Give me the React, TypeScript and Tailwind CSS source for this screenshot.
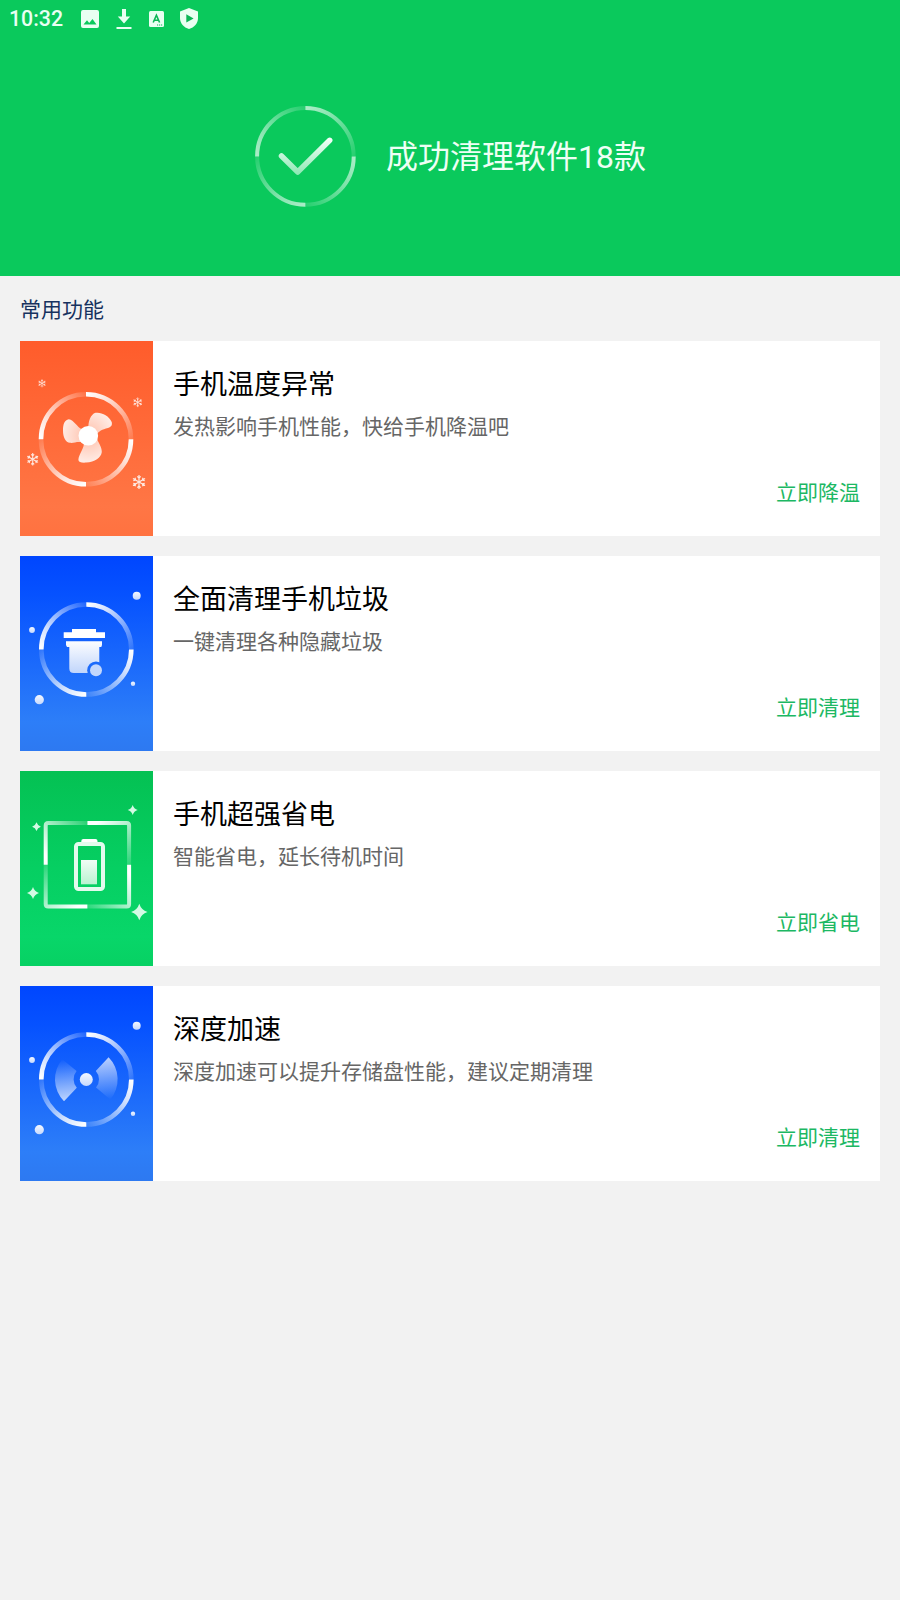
import React from 'react';

interface Feature {
  id: string;
  title: string;
  description: string;
  action: string;
  art: React.ReactNode;
}

interface RingProps {
  id: string;
  cx: number;
  cy: number;
  r: number;
  width: number;
  from?: number;
  to?: number;
}

const QUARTERS = [0, 90, 180, 270];

// Four quarter arcs, each fading clockwise
const Ring: React.FC<RingProps> = ({ id, cx, cy, r, width, from = 1, to = 0.12 }) => (
  <g transform={`translate(${cx} ${cy})`} fill="none">
    <defs>
      <linearGradient id={id} gradientUnits="userSpaceOnUse" x1="0" y1={-r} x2={r} y2="0">
        <stop offset="0" stopColor="#fff" stopOpacity={from} />
        <stop offset="0.3" stopColor="#fff" stopOpacity={from * 0.8} />
        <stop offset="1" stopColor="#fff" stopOpacity={to} />
      </linearGradient>
    </defs>
    {QUARTERS.map((angle) => (
      <path
        key={angle}
        d={`M0 ${-r}A${r} ${r} 0 0 1 ${r} 0`}
        stroke={`url(#${id})`}
        strokeWidth={width}
        transform={`rotate(${angle})`}
      />
    ))}
  </g>
);

const Snowflake = ({ x, y, r }: { x: number; y: number; r: number }) => (
  <g transform={`translate(${x} ${y}) scale(${r / 7})`} stroke="#fff" strokeWidth="1.2" fill="none" opacity="0.85">
    {[0, 60, 120, 180, 240, 300].map((angle) => (
      <path key={angle} d="M0 0V-7M-1.7 -5.6L0 -3.9L1.7 -5.6" transform={`rotate(${angle})`} />
    ))}
  </g>
);

const Sparkle = ({ x, y, r }: { x: number; y: number; r: number }) => (
  <path
    d="M0 -8Q1.9 -1.9 8 0Q1.9 1.9 0 8Q-1.9 1.9 -8 0Q-1.9 -1.9 0 -8Z"
    transform={`translate(${x} ${y}) scale(${r / 8})`}
    fill="#d3fae4"
  />
);

const FanArt = () => (
  <svg viewBox="0 0 133 195" className="h-full w-[133px] shrink-0">
    <defs>
      <linearGradient id="fan-bg" x1="0" y1="0" x2="0" y2="1">
        <stop offset="0" stopColor="#ff5c2b" />
        <stop offset="0.5" stopColor="#ff6b3a" />
        <stop offset="0.85" stopColor="#ff7645" />
        <stop offset="1" stopColor="#ff7240" />
      </linearGradient>
      <radialGradient id="fan-blade" gradientUnits="userSpaceOnUse" cx="68.3" cy="94.7" r="29">
        <stop offset="0.3" stopColor="#ffcdbc" />
        <stop offset="0.9" stopColor="#ffebe4" />
      </radialGradient>
    </defs>
    <rect width="133" height="195" fill="url(#fan-bg)" />
    <Ring id="fan-ring" cx={66} cy={98.3} r={45} width={4.6} />
    <g fill="url(#fan-blade)">
      <path d="M68.3 88C68.3 80 70.5 73.5 75.5 71.8C81 70.8 89 74.5 91.7 81C92.4 84 91.5 85.8 88 87C82 88.5 79 90 76 94Z" />
      <path d="M62 88.5C57 86 54 79 48.8 78.3C44.5 79.5 43 83 43 89.5C43 96.5 45.5 101.3 50 101.8C54 102.3 57 100.3 63 101.5Z" />
      <path d="M64 100.5C64.5 108 58.5 113 58.4 119C58.8 121.3 61 121.8 66 121.6C75 121 81 117 81.8 111C82 106 78.5 102 76.5 97Z" />
    </g>
    <circle cx="68.3" cy="94.7" r="9.8" fill="#fff" />
    <Snowflake x={22} y={42.3} r={4} />
    <Snowflake x={117.7} y={61.3} r={4.8} />
    <Snowflake x={12.7} y={118.3} r={6.2} />
    <Snowflake x={119} y={141} r={7} />
  </svg>
);

// Blue tile shared by the trash and boost features
const BlueTile: React.FC<{ id: string; children: React.ReactNode }> = ({ id, children }) => (
  <svg viewBox="0 0 133 195" className="h-full w-[133px] shrink-0">
    <defs>
      <linearGradient id={`${id}-bg`} x1="0" y1="0" x2="0" y2="1">
        <stop offset="0" stopColor="#0046ff" />
        <stop offset="0.2" stopColor="#0652ff" />
        <stop offset="0.85" stopColor="#2d7ef8" />
        <stop offset="1" stopColor="#2d79f1" />
      </linearGradient>
      <linearGradient id={`${id}-dot`} x1="0" y1="0" x2="0" y2="1">
        <stop offset="0" stopColor="#f4f8ff" />
        <stop offset="1" stopColor="#c6d9fd" />
      </linearGradient>
    </defs>
    <rect width="133" height="195" fill={`url(#${id}-bg)`} />
    <Ring id={`${id}-ring`} cx={66.3} cy={93.5} r={45} width={4.6} />
    {children}
    <g fill={`url(#${id}-dot)`}>
      <circle cx="116.7" cy="39.8" r="4" />
      <circle cx="12" cy="74" r="2.9" />
      <circle cx="113" cy="127.7" r="2.2" />
      <circle cx="19.3" cy="143.7" r="4.6" />
    </g>
  </svg>
);

const TrashArt = () => (
  <BlueTile id="trash">
    <defs>
      <linearGradient id="trash-can" gradientUnits="userSpaceOnUse" x1="0" y1="84" x2="0" y2="118">
        <stop offset="0" stopColor="#fff" />
        <stop offset="1" stopColor="#bfd4fb" />
      </linearGradient>
      <mask id="trash-cut">
        <rect width="133" height="195" fill="#fff" />
        <circle cx="76" cy="114.3" r="8.8" fill="#000" />
      </mask>
    </defs>
    <path d="M52 73H76V76.3H85V82H43.7V76.3H52Z" fill="#fff" />
    <path
      d="M46 85.3H82V89L81.3 91H79.3V117H53.8Q49.3 117 49.3 112.5V91H47L46 89Z"
      fill="url(#trash-can)"
      mask="url(#trash-cut)"
    />
    <circle cx="76" cy="114.3" r="6" fill="#c3d7fc" />
  </BlueTile>
);

const BoostArt = () => (
  <BlueTile id="boost">
    <defs>
      <linearGradient id="boost-blade" gradientUnits="userSpaceOnUse" x1="20" y1="-22" x2="25" y2="20">
        <stop offset="0" stopColor="#fff" stopOpacity="0.72" />
        <stop offset="1" stopColor="#fff" stopOpacity="0" />
      </linearGradient>
    </defs>
    <g transform="translate(66.3 93.3)" fill="url(#boost-blade)">
      <path d="M22.3 -22A31.3 31.3 0 0 1 24 20.1L9.7 8.2A12.7 12.7 0 0 0 9.5 -8.4Z" />
      <path d="M22.3 -22A31.3 31.3 0 0 1 24 20.1L9.7 8.2A12.7 12.7 0 0 0 9.5 -8.4Z" transform="rotate(180)" />
    </g>
    <circle cx="66.3" cy="93.5" r="6.5" fill="url(#boost-dot)" />
  </BlueTile>
);

const BatteryArt = () => (
  <svg viewBox="0 0 133 195" className="h-full w-[133px] shrink-0">
    <defs>
      <linearGradient id="battery-bg" x1="0" y1="0" x2="0" y2="1">
        <stop offset="0" stopColor="#04c153" />
        <stop offset="0.5" stopColor="#06cf62" />
        <stop offset="0.85" stopColor="#08d669" />
        <stop offset="1" stopColor="#07d163" />
      </linearGradient>
      <linearGradient id="battery-frame" gradientUnits="userSpaceOnUse" x1="10" y1="-42" x2="42" y2="0">
        <stop offset="0" stopColor="#fff" />
        <stop offset="1" stopColor="#fff" stopOpacity="0.15" />
      </linearGradient>
      <linearGradient id="battery-level" x1="0" y1="0" x2="0" y2="1">
        <stop offset="0" stopColor="#f0fdf5" />
        <stop offset="1" stopColor="#b9f3d1" />
      </linearGradient>
    </defs>
    <rect width="133" height="195" fill="url(#battery-bg)" />
    <g transform="translate(67.4 93.7)" fill="none" stroke="url(#battery-frame)" strokeWidth="4">
      {QUARTERS.map((angle) => (
        <path key={angle} d="M0 -41.7H39.2Q41.7 -41.7 41.7 -39.2V0" transform={`rotate(${angle})`} />
      ))}
    </g>
    <path d="M61.3 72V70Q61.3 68 63.3 68H75.5Q77.5 68 77.5 70V72Z" fill="#fff" />
    <rect x="56" y="73" width="27" height="45" rx="2.5" fill="none" stroke="#e3fbed" strokeWidth="4" />
    <rect x="61" y="89" width="16" height="24.3" fill="url(#battery-level)" />
    <Sparkle x={112.7} y={39} r={5} />
    <Sparkle x={16.5} y={55.7} r={4.4} />
    <Sparkle x={13} y={122} r={6} />
    <Sparkle x={119.3} y={141} r={8.2} />
  </svg>
);

const FEATURES: Feature[] = [
  {
    id: 'cool',
    title: '手机温度异常',
    description: '发热影响手机性能，快给手机降温吧',
    action: '立即降温',
    art: <FanArt />,
  },
  {
    id: 'trash',
    title: '全面清理手机垃圾',
    description: '一键清理各种隐藏垃圾',
    action: '立即清理',
    art: <TrashArt />,
  },
  {
    id: 'battery',
    title: '手机超强省电',
    description: '智能省电，延长待机时间',
    action: '立即省电',
    art: <BatteryArt />,
  },
  {
    id: 'boost',
    title: '深度加速',
    description: '深度加速可以提升存储盘性能，建议定期清理',
    action: '立即清理',
    art: <BoostArt />,
  },
];

const StatusBar = () => (
  <div className="flex h-[37px] items-center pl-[9px] text-[#e9fff2]">
    <span className="w-[72px] text-[21.3px] leading-9 font-medium">10:32</span>
    <svg viewBox="0 0 18 18" className="h-[18px] w-[18px]" fill="currentColor">
      <path
        fillRule="evenodd"
        d="M2 0H16Q18 0 18 2V16Q18 18 16 18H2Q0 18 0 16V2Q0 0 2 0ZM2.5 14.5H15.5L11.5 9L8.2 13L6 10.3Z"
      />
    </svg>
    <svg viewBox="0 0 16 22" className="ml-[17px] h-[22px] w-4" fill="currentColor">
      <path d="M6 1H10V8.5H14.2L8 15.5L1.8 8.5H6ZM0.5 19H15.5V21H0.5Z" />
    </svg>
    <svg viewBox="0 0 15 16" className="ml-[17px] h-4 w-[15px]">
      <rect width="15" height="16" rx="1.5" fill="currentColor" />
      <path d="M4.2 11.5L7.4 4.2L10.6 11.5M5.2 9.2H9.6" stroke="#0bb656" strokeWidth="1.6" fill="none" />
      <path d="M8 14H9.2M10 14H11.2M12 14H13.2" stroke="#0bb656" strokeWidth="1" />
    </svg>
    <svg viewBox="0 0 18 21" className="ml-4 h-[21px] w-[18px]">
      <path d="M9 0L18 3.5V10C18 15.3 14.2 19.5 9 21C3.8 19.5 0 15.3 0 10V3.5Z" fill="currentColor" />
      <path d="M6.3 6.2L13.6 10.4L6.3 14.6Z" fill="#0bb656" />
    </svg>
  </div>
);

const FeatureCard: React.FC<{ feature: Feature }> = ({ feature }) => (
  <div className="flex h-[195px] bg-white">
    {feature.art}
    <div className="flex flex-1 flex-col px-5 pt-[25px] pb-7">
      <h2 className="text-[27px] leading-[38px] text-black">{feature.title}</h2>
      <p className="mt-2 text-[21px] leading-[30px] text-[#666]">{feature.description}</p>
      <button className="mt-auto self-end text-[21px] leading-[30px] text-[#1cb863]">{feature.action}</button>
    </div>
  </div>
);

const App: React.FC = () => {
  return (
    <div className="min-h-[1600px] bg-[#f2f2f2] font-[Roboto,'Noto_Sans_CJK_SC',sans-serif]">
      <header className="h-[276px] bg-[#0ac95c]">
        <StatusBar />
        <div className="flex items-start justify-center gap-[30px] pt-[68px]">
          <svg viewBox="0 0 102 102" className="h-[102px] w-[102px]">
            <defs>
              <linearGradient id="check" gradientUnits="userSpaceOnUse" x1="0" y1="34" x2="0" y2="70">
                <stop offset="0" stopColor="#f3fff8" />
                <stop offset="1" stopColor="#8ce8b3" />
              </linearGradient>
            </defs>
            <Ring id="done-ring" cx={51.4} cy={51.4} r={48.3} width={4} from={0.66} />
            <path
              d="M27.5 51L43.7 67L75.7 35.3"
              fill="none"
              stroke="url(#check)"
              strokeWidth="5.5"
              strokeLinecap="round"
              strokeLinejoin="round"
            />
          </svg>
          <h1 className="text-[32px] leading-[104px] text-[#eefff5]">成功清理软件18款</h1>
        </div>
      </header>

      <main className="px-5">
        <div className="h-[65px] pt-[19px] text-[21px] leading-[30px] text-[#17325f]">常用功能</div>
        <div className="flex flex-col gap-5">
          {FEATURES.map((feature) => (
            <FeatureCard key={feature.id} feature={feature} />
          ))}
        </div>
      </main>
    </div>
  );
};

export default App;
